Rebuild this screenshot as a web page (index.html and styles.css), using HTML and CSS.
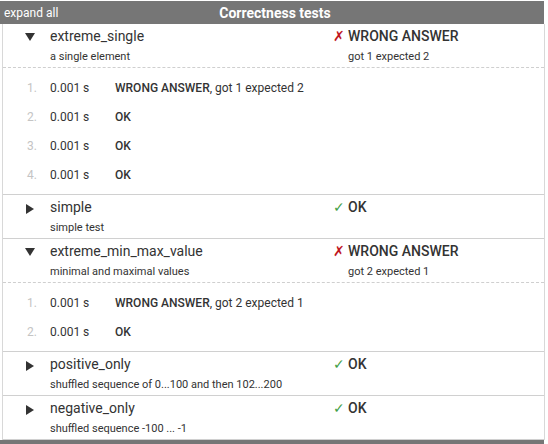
FILE: index.html
```html
<!DOCTYPE html>
<html>
<head>
<meta charset="utf-8">
<link rel="stylesheet" href="styles.css">
</head>
<body>
<div class="panel">
  <div class="header">
    <span class="expand">expand all</span>
    <span class="title">Correctness tests</span>
    <span></span>
  </div>
  <div class="body">
    <div class="test">
      <div class="row">
        <div class="tog"><svg width="10" height="8" viewBox="0 0 10 8"><polygon points="0,0 10,0 5,8" fill="#333"/></svg></div>
        <div class="info"><div class="name">extreme_single</div><div class="desc">a single element</div></div>
        <div class="status"><div class="st"><span class="mark bad">✗</span>WRONG ANSWER</div><div class="desc">got 1 expected 2</div></div>
      </div>
      <div class="detail">
        <div class="sub"><span class="num">1.</span><span class="time">0.001 s</span><span class="res"><b>WRONG ANSWER</b>, got 1 expected 2</span></div>
        <div class="sub"><span class="num">2.</span><span class="time">0.001 s</span><span class="res"><b>OK</b></span></div>
        <div class="sub"><span class="num">3.</span><span class="time">0.001 s</span><span class="res"><b>OK</b></span></div>
        <div class="sub"><span class="num">4.</span><span class="time">0.001 s</span><span class="res"><b>OK</b></span></div>
      </div>
    </div>
    <div class="test">
      <div class="row">
        <div class="tog"><svg width="8" height="10" viewBox="0 0 8 10"><polygon points="0,0 8,5 0,10" fill="#333"/></svg></div>
        <div class="info"><div class="name">simple</div><div class="desc">simple test</div></div>
        <div class="status"><div class="st"><span class="mark good">✓</span>OK</div></div>
      </div>
    </div>
    <div class="test">
      <div class="row">
        <div class="tog"><svg width="10" height="8" viewBox="0 0 10 8"><polygon points="0,0 10,0 5,8" fill="#333"/></svg></div>
        <div class="info"><div class="name">extreme_min_max_value</div><div class="desc">minimal and maximal values</div></div>
        <div class="status"><div class="st"><span class="mark bad">✗</span>WRONG ANSWER</div><div class="desc">got 2 expected 1</div></div>
      </div>
      <div class="detail">
        <div class="sub"><span class="num">1.</span><span class="time">0.001 s</span><span class="res"><b>WRONG ANSWER</b>, got 2 expected 1</span></div>
        <div class="sub"><span class="num">2.</span><span class="time">0.001 s</span><span class="res"><b>OK</b></span></div>
      </div>
    </div>
    <div class="test">
      <div class="row">
        <div class="tog"><svg width="8" height="10" viewBox="0 0 8 10"><polygon points="0,0 8,5 0,10" fill="#333"/></svg></div>
        <div class="info"><div class="name">positive_only</div><div class="desc">shuffled sequence of 0...100 and then 102...200</div></div>
        <div class="status"><div class="st"><span class="mark good">✓</span>OK</div></div>
      </div>
    </div>
    <div class="test">
      <div class="row">
        <div class="tog"><svg width="8" height="10" viewBox="0 0 8 10"><polygon points="0,0 8,5 0,10" fill="#333"/></svg></div>
        <div class="info"><div class="name">negative_only</div><div class="desc">shuffled sequence -100 ... -1</div></div>
        <div class="status"><div class="st"><span class="mark good">✓</span>OK</div></div>
      </div>
    </div>
  </div>
  <div class="footer"></div>
</div>
</body>
</html>
```
FILE: styles.css
```css
html, body {
  margin: 0;
  padding: 0;
  background: #fff;
}
body {
  font-family: Roboto, "Liberation Sans", sans-serif;
  color: #333;
}
.panel {
  width: 545px;
  padding-top: 1px;
}
.header {
  height: 23px;
  background: #767676;
  color: #fff;
  display: grid;
  grid-template-columns: 1fr auto 1fr;
  align-items: center;
  width: 544px;
}
.expand {
  font-size: 12px;
  padding-left: 4px;
  padding-top: 1px;
}
.title {
  font-size: 14px;
  font-weight: bold;
  padding-left: 6px;
}
.body {
  margin-left: 2px;
  border-left: 1px solid #d8d8d8;
  border-right: 1px solid #d8d8d8;
}
.test {
  border-bottom: 1px solid #d0d0d0;
}
.row {
  display: flex;
  height: 43px;
  padding-top: 2px;
  box-sizing: border-box;
}
.tog {
  width: 22px;
  padding-left: 16px;
  padding-top: 7px;
  display: flex;
  justify-content: center;
  align-items: flex-start;
  height: 10px;
}
.tog svg { display: block; }
.info {
  width: 283px;
  padding-left: 9px;
}
.name {
  font-size: 14px;
  line-height: 20px;
}
.desc {
  font-size: 11px;
  line-height: 16px;
  margin-top: 3px;
}
.status .desc {
  padding-left: 15px;
}
.st {
  font-size: 14px;
  line-height: 20px;
  font-weight: 500;
  display: flex;
}
.mark {
  width: 15px;
  font-weight: normal;
}
.bad { color: #c0161e; }
.good { color: #43a047; }
.detail {
  border-top: 1px dashed #cfcfcf;
  padding: 5px 0;
}
.sub {
  display: flex;
  height: 29px;
  align-items: center;
  font-size: 12px;
}
.num {
  width: 47px;
  text-align: right;
  color: #c4c4c4;
  padding-right: 13px;
  box-sizing: border-box;
}
.time {
  width: 65px;
}
.res b {
  font-weight: 500;
}
.footer {
  height: 6px;
  width: 544px;
  background: #767676;
}
```
